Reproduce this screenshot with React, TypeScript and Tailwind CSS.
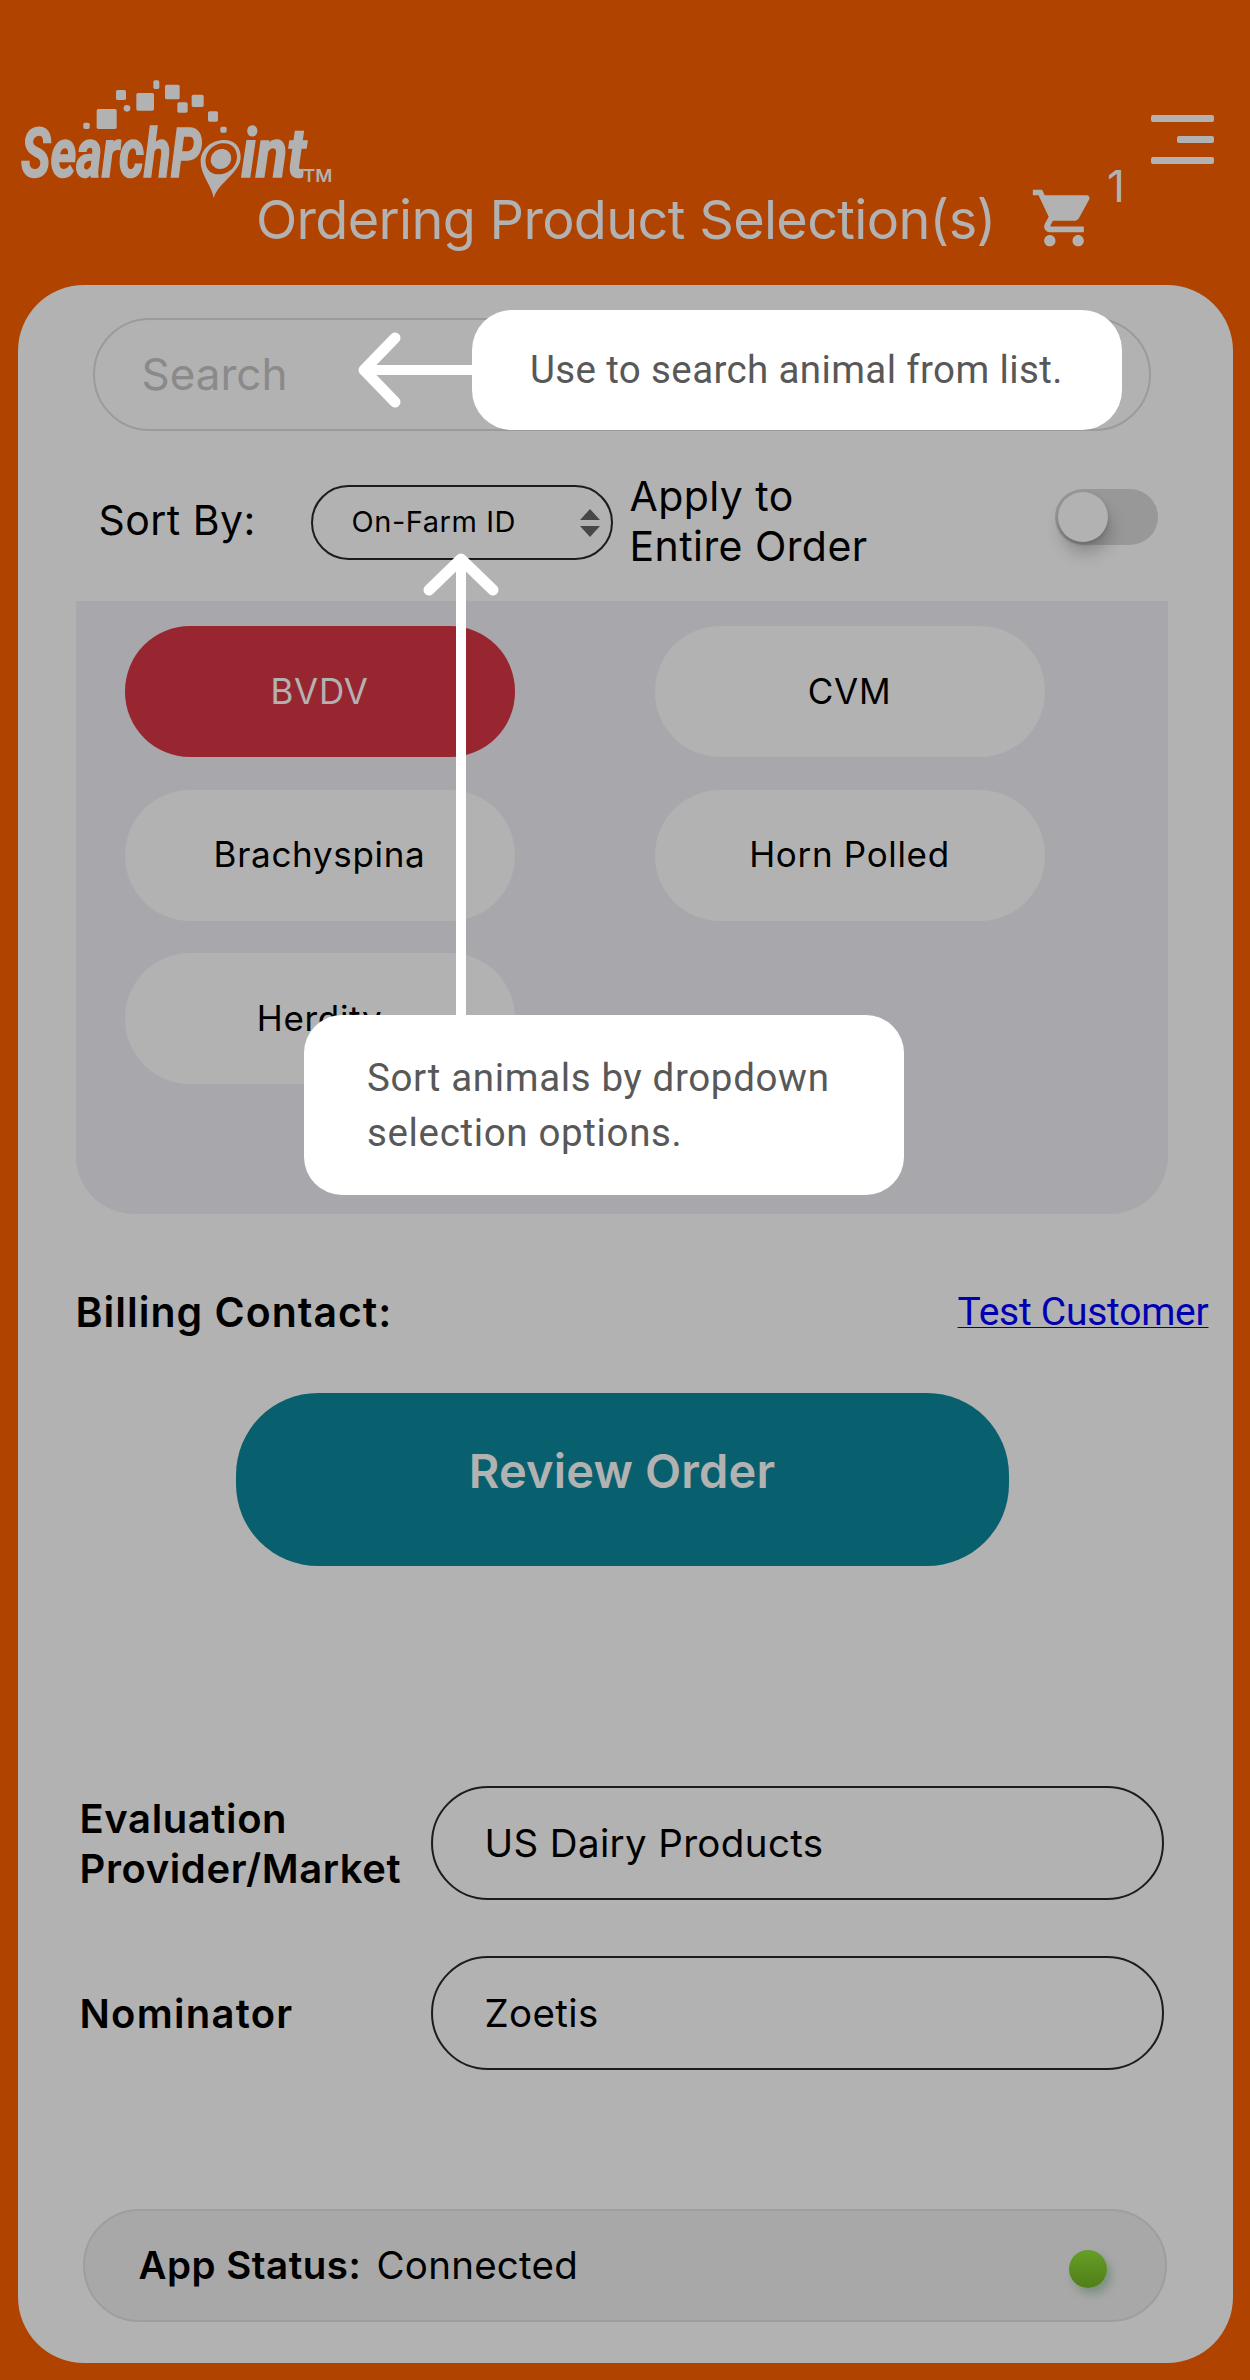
import { MdShoppingCart } from "react-icons/md";

const SQUARES = [
  [250, 188, 19, 19], [290, 147, 60, 60], [348, 90, 30, 30], [409, 99, 53, 53],
  [460, 61, 18, 26], [495, 74, 44, 44], [532, 127, 31, 31], [575, 104, 36, 37],
  [624, 154, 30, 31], [661, 200, 19, 18],
];

function Logo() {
  return (
    <svg width="340" height="138" viewBox="0 0 1020 414" fill="#b2b2b2" aria-label="SearchPoint">
      {SQUARES.map(([x, y, w, h]) => (
        <rect key={x} x={x} y={y} width={w} height={h} rx="5" />
      ))}
      <circle cx="381" cy="145" r="10" />
      <g fontFamily="Roboto" fontWeight="700" fontStyle="italic" fontSize="203" stroke="#b2b2b2" strokeWidth="5">
        <text x="63" y="350" textLength="542" lengthAdjust="spacingAndGlyphs">SearchP</text>
        <text x="724" y="350" textLength="194" lengthAdjust="spacingAndGlyphs">int</text>
      </g>
      <path
        fillRule="evenodd"
        d="M641 414C637 380 602 345 602 305C602 266 635 240 672 240C705 240 722 262 722 291C722 338 654 368 641 414ZM617 308C619 332 636 344 660 343C690 342 711 317 711 289C710 264 694 250 671 250C641 250 615 274 617 308Z"
      />
      <ellipse cx="663" cy="297" rx="32" ry="29" transform="rotate(-35 663 297)" />
      <text x="909" y="366" fontFamily="Inter" fontWeight="600" fontSize="52" textLength="88" lengthAdjust="spacingAndGlyphs">TM</text>
    </svg>
  );
}

function Header() {
  return (
    <header className="h-[285px] pt-[60px] text-[#b2b2b2]">
      <div className="flex h-[138px] justify-between">
        <Logo />
        <div className="mt-[55px] mr-9 flex w-[63px] flex-col items-end gap-[14px]">
          <span className="h-[7px] w-full rounded-[2px] bg-[#b2b2b2]" />
          <span className="h-[7px] w-[37px] rounded-[2px] bg-[#b2b2b2]" />
          <span className="h-[7px] w-full rounded-[2px] bg-[#b2b2b2]" />
        </div>
      </div>
      <div className="-mt-[5px] flex items-start pl-64">
        <h1 className="w-[774px] text-[54px] leading-[54px] font-normal tracking-[-0.68px] whitespace-nowrap">
          Ordering Product Selection(s)
        </h1>
        <MdShoppingCart className="-mt-[9px] size-[68px]" />
        <span className="-mt-[29px] ml-[9px] text-[44px] leading-[44px]">1</span>
      </div>
    </header>
  );
}

const PILLS = [
  { name: "BVDV", style: "bg-[#982631] text-[#b2b2b2]" },
  { name: "CVM", style: "bg-[#b2b2b2] text-black" },
  { name: "Brachyspina", style: "bg-[#b2b2b2] pb-[2px] text-black" },
  { name: "Horn Polled", style: "bg-[#b2b2b2] pb-[2px] text-black" },
  { name: "Herdity", style: "bg-[#b2b2b2] text-black" },
];

function Field({ label, value, labelStyle }: { label: string; value: string; labelStyle: string }) {
  return (
    <div className="flex items-center">
      <label className={`w-[351px] pt-[2px] text-[40px] leading-[50px] font-semibold whitespace-pre-line ${labelStyle}`}>{label}</label>
      <div className="flex h-[114px] w-[733px] items-center rounded-full border-2 border-[#1c1c1c] pt-[1px] pl-[52px] text-[38.5px] tracking-[0.36px]">
        {value}
      </div>
    </div>
  );
}

export default function App() {
  return (
    <div className="relative h-[2380px] w-[1250px] overflow-hidden bg-[#b04300] font-['Inter',sans-serif] text-black">
      <Header />
      <main className="mx-auto flex h-[2078px] w-[1215px] flex-col rounded-[66px] bg-[#b2b2b2]">
        <div className="mt-[33px] ml-[75px] flex h-[113px] w-[1058px] items-center rounded-full border-2 border-[#9b9b9b] pb-[2px] pl-[47px] text-[44px] text-[#8a8a8a]">
          Search
        </div>

        <div className="mt-[54px] flex h-[75px] items-center pl-[81px]">
          <span className="w-[212px] pb-[3px] text-[41px] tracking-[0.45px]">Sort By:</span>
          <div className="flex h-[75px] w-[302px] items-center justify-between rounded-full border-2 border-[#1c1c1c] pr-[11px] pl-[39px]">
            <span className="pb-[2px] text-[29px] tracking-[0.55px]">On-Farm ID</span>
            <svg width="20" height="28" viewBox="0 0 20 28" fill="#474747">
              <path d="M10 0L20 11H0ZM0 17H20L10 28Z" />
            </svg>
          </div>
          <span className="ml-[17px] w-[425px] pb-[3px] text-[41px] leading-[50px] tracking-[0.43px]">
            Apply to
            <br />
            Entire Order
          </span>
          <div className="mb-[11px] flex h-[56px] w-[103px] items-center rounded-full bg-[#989898] pl-[3px]">
            <div className="size-[50px] rounded-full bg-[#b2b2b2] shadow-[3px_12px_16px_rgba(0,0,0,0.2),0_2px_4px_rgba(0,0,0,0.15)]" />
          </div>
        </div>

        <div className="mt-[41px] ml-[58px] grid h-[613px] w-[1092px] shrink-0 auto-rows-[131px] grid-cols-[390px_390px] gap-x-[140px] gap-y-[32.5px] rounded-b-[58px] bg-[#a8a7ac] pt-[25px] pl-[49px]">
          {PILLS.map((p) => (
            <div key={p.name} className={`flex items-center justify-center rounded-[65px] text-[35px] tracking-[0.68px] ${p.style}`}>
              {p.name}
            </div>
          ))}
        </div>

        <div className="mt-[73px] flex h-[50px] items-center justify-between pr-[24px] pl-[58px]">
          <span className="text-[41px] leading-[50px] font-semibold tracking-[1px]">Billing Contact:</span>
          <a className="font-['Roboto',sans-serif] text-[39px] leading-[50px] tracking-[-0.26px] text-[#0000b2] underline decoration-1 underline-offset-[2px]">
            Test Customer
          </a>
        </div>

        <div className="mt-[56px] ml-[218px] flex h-[173px] w-[773px] items-center justify-center rounded-[82px] bg-[#08606e] pb-[17px] text-[47px] font-semibold tracking-[0.14px] text-[#b2b2b2]">
          Review Order
        </div>

        <div className="mt-[220px] flex flex-col gap-[56px] pl-[62px]">
          <Field label={"Evaluation\nProvider/Market"} value="US Dairy Products" labelStyle="tracking-[0.6px]" />
          <Field label="Nominator" value="Zoetis" labelStyle="tracking-[1.25px]" />
        </div>

        <div className="mt-[139px] ml-[65px] flex h-[113px] w-[1084px] items-center rounded-full border-2 border-[#9e9e9e] bg-[#a8a8a8] pl-[54px] text-[38.5px]">
          <span className="w-[238px] pt-[1px] font-semibold tracking-[0.5px]">App Status:</span>
          <span className="w-[692px] pt-[1px] tracking-[0.24px]">Connected</span>
          <span className="mt-[6px] size-[38px] rounded-full bg-linear-to-b from-[#659f26] to-[#507e19] shadow-[4px_6px_9px_rgba(70,120,80,0.45)]" />
        </div>
      </main>

      <svg className="absolute top-[325px] left-[350px]" width="130" height="90" fill="none" stroke="#fff" strokeLinecap="round" strokeLinejoin="round">
        <path d="M14 45H130" strokeWidth="10" />
        <path d="M45 13L14 45L45 77" strokeWidth="11" />
      </svg>
      <div className="absolute top-[310px] left-[472px] flex h-[120px] w-[650px] items-center rounded-[40px] bg-white pb-[1px] pl-[58px] font-['Roboto',sans-serif] text-[38.5px] tracking-[0.37px] whitespace-nowrap text-[#585858]">
        Use to search animal from list.
      </div>

      <svg className="absolute top-[545px] left-[416px]" width="90" height="480" fill="none" stroke="#fff" strokeLinecap="round" strokeLinejoin="round">
        <path d="M45 14V480" strokeWidth="10" />
        <path d="M13 45L45 14L77 45" strokeWidth="11" />
      </svg>
      <div className="absolute top-[1015px] left-[304px] flex h-[180px] w-[600px] items-center rounded-[38px] bg-white pl-[63px] font-['Roboto',sans-serif] text-[38.5px] leading-[55px] tracking-[0.65px] whitespace-nowrap text-[#585858]">
        <p>
          Sort animals by dropdown
          <br />
          selection options.
        </p>
      </div>
    </div>
  );
}
